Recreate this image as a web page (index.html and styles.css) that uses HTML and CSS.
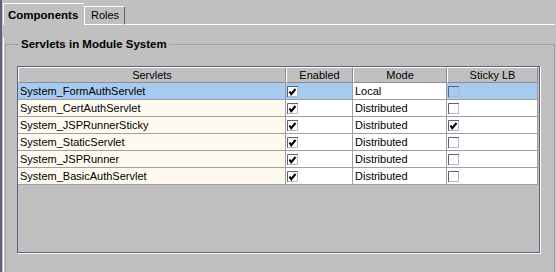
FILE: index.html
```html
<!DOCTYPE html>
<html lang="en">
<head>
  <title>Servlets in Module System</title>
  <meta charset="utf-8">
  <link rel="stylesheet" href="styles.css">
</head>
<body>
  <div class="window">
    <div class="tabs">
      <div class="tab tab-active">Components</div>
      <div class="tab tab-roles">Roles</div>
      <div class="tabs-fill"></div>
    </div>
    <div class="panel">
      <fieldset class="group">
        <legend>Servlets in Module System</legend>
        <div class="scroll">
          <table class="grid">
            <colgroup>
              <col class="col-name">
              <col class="col-enabled">
              <col class="col-mode">
              <col class="col-sticky">
            </colgroup>
            <thead>
              <tr><th>Servlets</th><th>Enabled</th><th>Mode</th><th>Sticky LB</th></tr>
            </thead>
            <tbody>
              <tr class="selected">
                <td class="name">System_FormAuthServlet</td>
                <td class="check"><svg class="box on" viewBox="0 0 11 11"><rect class="box-fill" x="1" y="1" width="9" height="9"/><path class="box-dark" d="M0.5 11V0.5H11"/><path class="box-light" d="M1 10.5H10.5V1"/><path class="tick" d="M2.5 5.5L4.2 8.2L8.5 3"/></svg></td>
                <td class="mode editing">Local</td>
                <td class="check"><svg class="box" viewBox="0 0 11 11"><path class="box-dark" d="M0.5 11V0.5H11"/><path class="box-light" d="M1 10.5H10.5V1"/></svg></td>
              </tr>
              <tr>
                <td class="name">System_CertAuthServlet</td>
                <td class="check"><svg class="box on" viewBox="0 0 11 11"><rect class="box-fill" x="1" y="1" width="9" height="9"/><path class="box-dark" d="M0.5 11V0.5H11"/><path class="box-light" d="M1 10.5H10.5V1"/><path class="tick" d="M2.5 5.5L4.2 8.2L8.5 3"/></svg></td>
                <td class="mode">Distributed</td>
                <td class="check"><svg class="box" viewBox="0 0 11 11"><path class="box-dark" d="M0.5 11V0.5H11"/><path class="box-light" d="M1 10.5H10.5V1"/></svg></td>
              </tr>
              <tr>
                <td class="name">System_JSPRunnerSticky</td>
                <td class="check"><svg class="box on" viewBox="0 0 11 11"><rect class="box-fill" x="1" y="1" width="9" height="9"/><path class="box-dark" d="M0.5 11V0.5H11"/><path class="box-light" d="M1 10.5H10.5V1"/><path class="tick" d="M2.5 5.5L4.2 8.2L8.5 3"/></svg></td>
                <td class="mode">Distributed</td>
                <td class="check"><svg class="box on" viewBox="0 0 11 11"><rect class="box-fill" x="1" y="1" width="9" height="9"/><path class="box-dark" d="M0.5 11V0.5H11"/><path class="box-light" d="M1 10.5H10.5V1"/><path class="tick" d="M2.5 5.5L4.2 8.2L8.5 3"/></svg></td>
              </tr>
              <tr>
                <td class="name">System_StaticServlet</td>
                <td class="check"><svg class="box on" viewBox="0 0 11 11"><rect class="box-fill" x="1" y="1" width="9" height="9"/><path class="box-dark" d="M0.5 11V0.5H11"/><path class="box-light" d="M1 10.5H10.5V1"/><path class="tick" d="M2.5 5.5L4.2 8.2L8.5 3"/></svg></td>
                <td class="mode">Distributed</td>
                <td class="check"><svg class="box" viewBox="0 0 11 11"><path class="box-dark" d="M0.5 11V0.5H11"/><path class="box-light" d="M1 10.5H10.5V1"/></svg></td>
              </tr>
              <tr>
                <td class="name">System_JSPRunner</td>
                <td class="check"><svg class="box on" viewBox="0 0 11 11"><rect class="box-fill" x="1" y="1" width="9" height="9"/><path class="box-dark" d="M0.5 11V0.5H11"/><path class="box-light" d="M1 10.5H10.5V1"/><path class="tick" d="M2.5 5.5L4.2 8.2L8.5 3"/></svg></td>
                <td class="mode">Distributed</td>
                <td class="check"><svg class="box" viewBox="0 0 11 11"><path class="box-dark" d="M0.5 11V0.5H11"/><path class="box-light" d="M1 10.5H10.5V1"/></svg></td>
              </tr>
              <tr>
                <td class="name">System_BasicAuthServlet</td>
                <td class="check"><svg class="box on" viewBox="0 0 11 11"><rect class="box-fill" x="1" y="1" width="9" height="9"/><path class="box-dark" d="M0.5 11V0.5H11"/><path class="box-light" d="M1 10.5H10.5V1"/><path class="tick" d="M2.5 5.5L4.2 8.2L8.5 3"/></svg></td>
                <td class="mode">Distributed</td>
                <td class="check"><svg class="box" viewBox="0 0 11 11"><path class="box-dark" d="M0.5 11V0.5H11"/><path class="box-light" d="M1 10.5H10.5V1"/></svg></td>
              </tr>
            </tbody>
          </table>
        </div>
      </fieldset>
    </div>
  </div>
</body>
</html>
```

FILE: styles.css
```css
*, *::before, *::after {
  box-sizing: border-box;
}

html, body {
  margin: 0;
  padding: 0;
}

body {
  height: 272px;
  overflow: hidden;
  background-color: #C0C0C0;
  color: #000000;
  font-family: "Liberation Sans", Arial, sans-serif;
  font-size: 11px;
}

.window {
  height: 272px;
  overflow: hidden;
  padding-left: 1px;
  border-left: 2px solid #5F5F7F;
}

/* tabs */

.tabs {
  display: flex;
  align-items: flex-end;
  height: 25px;
}

.tab {
  height: 19px;
  padding: 0 6px;
  border-top: 1px solid #FFFFFF;
  border-left: 1px solid #FFFFFF;
  border-bottom: 1px solid #FFFFFF;
  line-height: 17px;
  white-space: nowrap;
}

.tab-active {
  width: 81px;
  height: 22px;
  padding: 3px 4px 0;
  border-bottom: none;
  font-size: 11.5px;
  font-weight: bold;
}

.tab-roles {
  width: 41px;
  border-right: 1px solid #5F5F7F;
}

.tabs-fill {
  flex: 1;
  height: 1px;
  margin-right: 1px;
  background-color: #FFFFFF;
}

/* group box, open at the bottom where the window cuts it */

.panel {
  height: 247px;
  border-left: 1px solid #FFFFFF;
}

.group {
  min-width: 0;
  margin: 12px 1px 0 1px;
  padding: 14px 14px 60px 11px;
  border: 1px solid #A0A0A0;
  border-bottom: none;
}

.group legend {
  margin-left: 2px;
  padding: 0 2px;
  font-size: 11.5px;
  font-weight: bold;
  line-height: 15px;
}

/* table */

.scroll {
  height: 187px;
  border: 1px solid #5F5F7F;
  box-shadow: 1px 1px 0 #FFFFFF;
  background-color: #C0C0C0;
}

.grid {
  width: 520px;
  table-layout: fixed;
  border-collapse: separate;
  border-spacing: 0;
}

.col-name { width: 268px; }
.col-enabled { width: 67px; }
.col-mode { width: 94px; }
.col-sticky { width: 91px; }

.grid th {
  padding: 0;
  border-top: 1px solid #FFFFFF;
  border-left: 1px solid #FFFFFF;
  border-right: 1px solid #8C8C8C;
  border-bottom: 1px solid #8C8C8C;
  background-color: #C0C0C0;
  font-weight: normal;
  line-height: 14px;
  text-align: center;
  white-space: nowrap;
}

.grid td {
  padding: 0 2px;
  border-right: 1px solid #A0A0A0;
  border-bottom: 1px solid #A0A0A0;
  background-color: #FFFFFF;
  line-height: 16px;
  white-space: nowrap;
  overflow: hidden;
}

.grid td.name {
  background-color: #FFFAF0;
}

.grid .selected td {
  background-color: #A6CAF0;
}

.grid .selected td.editing {
  background-color: #FFFFFF;
}

.grid td.check {
  padding: 3px 0 2px 1px;
}

/* checkbox */

.box {
  display: block;
  width: 11px;
  height: 11px;
}

.box-fill {
  fill: #FFFFFF;
}

.box-dark {
  fill: none;
  stroke: #5F5F7F;
}

.box-light {
  fill: none;
  stroke: #B8B8C0;
}

.tick {
  fill: none;
  stroke: #000000;
  stroke-width: 2;
}
```
